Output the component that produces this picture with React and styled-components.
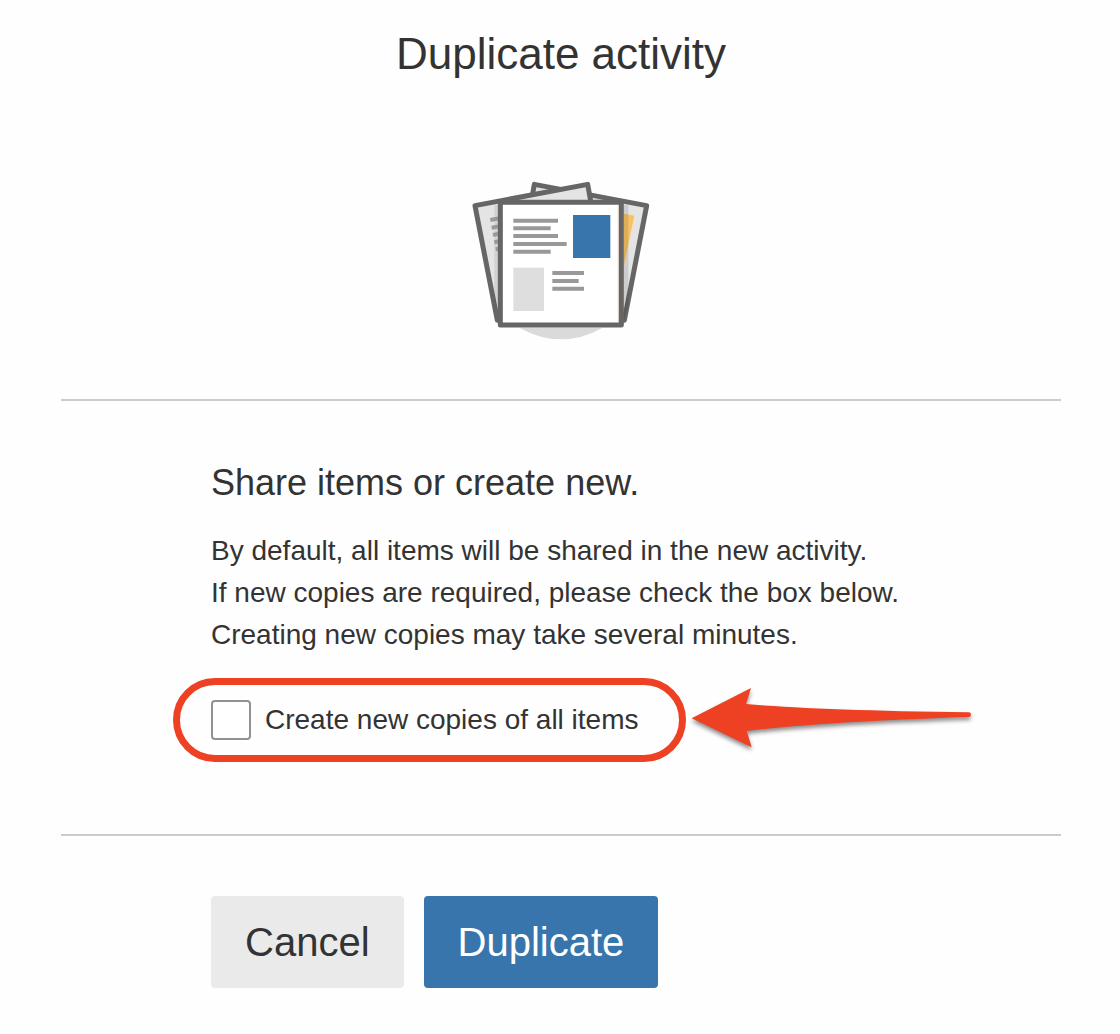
import React, { useState } from 'react';
import styled, { createGlobalStyle, ThemeProvider } from 'styled-components';

const theme = {
    colors: {
        text: '#333333',
        blue: '#3875ad',
        lightGray: '#eaeaea',
        border: '#cccccc',
        gray: '#999999',
        darkGray: '#666666',
        red: '#ee4023',
        white: '#ffffff',
    },
};

const GlobalStyle = createGlobalStyle`
    * {
        box-sizing: border-box;
    }

    body {
        margin: 0;
        background-color: #fefefe;
        color: #333333;
        font-family: "Liberation Sans", Arial, sans-serif;
    }
`;

const Dialog = styled.form`
    display: flex;
    flex-flow: column;
    padding: 28px 59px 46px 61px;
`;

const Header = styled.header`
    display: flex;
    flex-flow: column;
    align-items: center;
    row-gap: 100px;
    padding-bottom: 59px;
`;

const Title = styled.h1`
    margin: 0;
    font-size: 44px;
    line-height: 52px;
    font-weight: 400;
`;

const Body = styled.section`
    padding: 61px 150px 94px;
    border-top: 2px solid ${props => props.theme.colors.border};
    border-bottom: 2px solid ${props => props.theme.colors.border};
`;

const Heading = styled.h2`
    margin: 0 0 26px;
    font-size: 36px;
    line-height: 42px;
    font-weight: 400;
`;

const Description = styled.p`
    margin: 0 0 44px;
    font-size: 28px;
    line-height: 42px;
`;

const Option = styled.div`
    position: relative;
    display: flex;
    align-items: center;
    width: fit-content;
`;

const OptionLabel = styled.label`
    display: flex;
    align-items: center;
    column-gap: 14px;
    font-size: 28px;
    line-height: 40px;
    cursor: pointer;
`;

const Checkbox = styled.input`
    appearance: none;
    width: 40px;
    height: 40px;
    margin: 0;
    border: 2px solid #929292;
    border-radius: 4px;
    background-color: ${props => props.theme.colors.white};
    cursor: pointer;

    &:checked {
        border-color: ${props => props.theme.colors.blue};
        background-color: ${props => props.theme.colors.blue};
        box-shadow: inset 0 0 0 6px ${props => props.theme.colors.white};
    }
`;

const Highlight = styled.div`
    position: absolute;
    inset: -22px -47px -22px -38px;
    border: 7px solid ${props => props.theme.colors.red};
    border-radius: 42px;
    pointer-events: none;
`;

const ArrowIcon = styled.svg`
    position: absolute;
    top: -20px;
    left: calc(100% + 47px);
    width: 300px;
    height: 80px;
    pointer-events: none;
    filter: drop-shadow(0 3px 2px rgba(0, 0, 0, 0.45));
`;

const Actions = styled.footer`
    display: flex;
    column-gap: 20px;
    padding: 60px 150px 0;
`;

const Button = styled.button`
    height: 92px;
    padding: 0 34px;
    border: none;
    border-radius: 4px;
    background-color: ${props => props.$primary ? props.theme.colors.blue : props.theme.colors.lightGray};
    color: ${props => props.$primary ? props.theme.colors.white : props.theme.colors.text};
    font-family: inherit;
    font-size: 40px;
    line-height: 48px;
    cursor: pointer;
`;

function ActivityIcon() {
    return (
        <svg width="180" height="160" viewBox="0 0 540 480" aria-hidden="true">
            <path d="M145 443 Q270 513 395 443Z" fill="#dadada" />
            {/* back sheets */}
            <g stroke="#666" strokeWidth="15" strokeLinejoin="round" fill="#e4e4e4">
                <path d="M190 13 L527 77 L460 421 H130 L130 350Z" />
                <path d="M459 101 L490 107 L459 255Z" fill="#f8c163" stroke="none" />
                <path d="M12 77 L350 13 L364 90 L400 421 H79Z" />
            </g>
            <path d="M459 75 H472 V370 L459 425Z" fill="#000" opacity="0.1" />
            <path d="M70 75 H81 V400 L70 360Z" fill="#000" opacity="0.08" />
            <g stroke="#999" strokeWidth="12">
                <path d="M58 120 L85 115 M62 143 L85 139 M66 165 L85 161 M70 187 L85 184 M74 208 L85 206" />
            </g>
            {/* front sheet */}
            <rect x="88" y="67" width="363" height="368" fill="#fff" stroke="#666" strokeWidth="15" strokeLinejoin="round" />
            <path d="M442 76 V426" stroke="#d9cbbd" strokeWidth="3" />
            <rect x="306" y="105" width="112" height="129" fill="#3875ad" />
            <rect x="127" y="263" width="92" height="130" fill="#dedede" />
            <path
                d="M127 122 H261 M127 145 H239 M127 168 H261 M127 192 H287 M127 215 H239 M244 279 H339 M244 303 H323 M244 326 H339"
                stroke="#999"
                strokeWidth="12"
            />
        </svg>
    );
}

function Arrow() {
    return (
        <ArrowIcon viewBox="0 0 900 240" aria-hidden="true">
            <path
                d="M17 115 L195 24 L180 72 Q390 91 848 97 Q855 97 855 104 Q855 111 848 111 Q400 126 182 153 L197 202Z"
                fill="#ee4023"
            />
        </ArrowIcon>
    );
}

function App() {

    const [ copyItems, setCopyItems ] = useState(false);

    return (
        <ThemeProvider theme={theme}>
            <GlobalStyle />
            <Dialog onSubmit={e => e.preventDefault()}>
                <Header>
                    <Title>Duplicate activity</Title>
                    <ActivityIcon />
                </Header>
                <Body>
                    <Heading>Share items or create new.</Heading>
                    <Description>
                        By default, all items will be shared in the new activity.<br />
                        If new copies are required, please check the box below.<br />
                        Creating new copies may take several minutes.
                    </Description>
                    <Option>
                        <OptionLabel htmlFor="copy-items">
                            <Checkbox
                                id="copy-items"
                                type="checkbox"
                                checked={copyItems}
                                onChange={e => setCopyItems(e.target.checked)}
                            />
                            Create new copies of all items
                        </OptionLabel>
                        <Highlight />
                        <Arrow />
                    </Option>
                </Body>
                <Actions>
                    <Button type="button">Cancel</Button>
                    <Button type="submit" $primary>Duplicate</Button>
                </Actions>
            </Dialog>
        </ThemeProvider>
    );
}

export default App;
